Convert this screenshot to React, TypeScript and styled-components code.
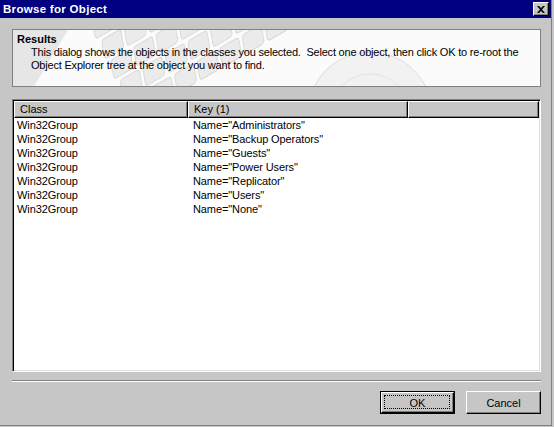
import styled, { createGlobalStyle } from "styled-components";

const GlobalStyle = createGlobalStyle`
  html, body {
    margin: 0;
    padding: 0;
    background: #c6c6c6;
  }
  body {
    font-family: "Liberation Sans", Arial, sans-serif;
    font-size: 11px;
    color: #000;
  }
`;

const Window = styled.div`
  width: 552px;
  height: 426px;
  box-sizing: border-box;
  border-right: 1px solid #808080;
  border-bottom: 1px solid #808080;
  background: #c6c6c6;
  display: flex;
  flex-direction: column;
`;

const TitleBar = styled.div`
  height: 18px;
  background: #000080;
  display: flex;
  align-items: center;
  justify-content: space-between;
  padding: 0 2px 0 3px;
`;

const TitleText = styled.span`
  color: #fff;
  font-weight: bold;
  font-size: 11.5px;
  letter-spacing: 0.3px;
`;

const CloseButton = styled.div`
  width: 16px;
  height: 14px;
  box-sizing: border-box;
  background: #c6c6c6;
  border-top: 1px solid #fff;
  border-left: 1px solid #fff;
  border-right: 1px solid #000;
  border-bottom: 1px solid #000;
  box-shadow: inset -1px -1px #808080;
  display: flex;
  align-items: center;
  justify-content: center;
`;

const Body = styled.div`
  flex: 1;
  display: flex;
  flex-direction: column;
  padding: 11px 10px 0 12px;
`;

const ResultsPanel = styled.div`
  position: relative;
  height: 58px;
  box-sizing: border-box;
  border: 1px solid #808080;
  background: #fbfbfb;
  overflow: hidden;
  padding: 3px 4px;
`;

const PanelArt = styled.svg`
  position: absolute;
  left: 0;
  top: 0;
`;

const PanelText = styled.div`
  position: relative;
  line-height: 13px;
`;

const PanelTitle = styled.div`
  font-weight: bold;
`;

const PanelDesc = styled.div`
  padding-left: 14px;
  white-space: nowrap;
  letter-spacing: -0.2px;
`;

const ListView = styled.div`
  margin-top: 12px;
  height: 273px;
  box-sizing: border-box;
  border-top: 1px solid #808080;
  border-left: 1px solid #808080;
  border-right: 1px solid #fff;
  border-bottom: 1px solid #fff;
  box-shadow: inset 1px 1px #000, inset -1px -1px #dfdfdf;
  background: #fff;
  padding: 1px;
  display: flex;
  flex-direction: column;
`;

const Columns = styled.div`
  display: grid;
  grid-template-columns: 174px 220px 1fr;
`;

const HeaderCell = styled.div`
  height: 17px;
  box-sizing: border-box;
  background: #c6c6c6;
  border-top: 1px solid #fff;
  border-left: 1px solid #fff;
  border-right: 1px solid #000;
  border-bottom: 1px solid #000;
  box-shadow: inset -1px -1px #808080;
  padding-left: 5px;
  line-height: 14px;
  white-space: nowrap;
`;

const Cell = styled.div<{ $pad: number }>`
  height: 14px;
  line-height: 14px;
  padding-left: ${({ $pad }) => $pad}px;
  white-space: nowrap;
  letter-spacing: -0.1px;
`;

const Separator = styled.div`
  margin-top: 8px;
  height: 1px;
  background: #808080;
  border-bottom: 1px solid #fff;
`;

const ButtonRow = styled.div`
  margin-top: 9px;
  display: flex;
  justify-content: flex-end;
  gap: 11px;
`;

const Button = styled.div<{ $default?: boolean }>`
  width: 75px;
  height: 23px;
  box-sizing: border-box;
  background: #c6c6c6;
  border: ${({ $default }) => ($default ? "1px solid #000" : "none")};
  display: flex;
`;

const ButtonFace = styled.div<{ $focused?: boolean }>`
  flex: 1;
  position: relative;
  border-top: 1px solid #fff;
  border-left: 1px solid #fff;
  border-right: 1px solid #000;
  border-bottom: 1px solid #000;
  box-shadow: inset -1px -1px #808080;
  display: flex;
  align-items: center;
  justify-content: center;
  font-size: 11px;

  &::after {
    content: "";
    display: ${({ $focused }) => ($focused ? "block" : "none")};
    position: absolute;
    left: 2px;
    top: 2px;
    right: 3px;
    bottom: 3px;
    border: 1px dotted #000;
  }
`;

const rows = [
  "Administrators",
  "Backup Operators",
  "Guests",
  "Power Users",
  "Replicator",
  "Users",
  "None",
];

function Artwork() {
  const keys = [];
  for (let r = 0; r < 6; r++) {
    for (let c = 0; c < 10; c++) {
      keys.push(
        <rect
          key={`${r}-${c}`}
          x={c * 26 + r * 6}
          y={r * 22}
          width={22}
          height={18}
          rx={3}
          fill="#ebebeb"
          stroke="#d9d9d9"
        />
      );
    }
  }
  return (
    <PanelArt width="530" height="58" viewBox="0 0 530 58">
      <polygon points="0,0 55,0 20,58 0,58" fill="#e6e6e6" />
      <g transform="translate(70 -30) rotate(-30 0 0) skewX(-20)">{keys}</g>
      <circle cx="357" cy="84" r="62" fill="#f2f2f2" stroke="#dcdcdc" />
      <circle cx="357" cy="84" r="40" fill="none" stroke="#e4e4e4" />
      <circle cx="357" cy="84" r="22" fill="#e6e6e6" stroke="#d2d2d2" />
      <circle cx="357" cy="84" r="10" fill="#fbfbfb" stroke="#d2d2d2" />
      <rect x="440" y="0" width="90" height="58" fill="#fbfbfb" opacity="0.75" />
    </PanelArt>
  );
}

export default function App() {
  return (
    <>
      <GlobalStyle />
      <Window>
        <TitleBar>
          <TitleText>Browse for Object</TitleText>
          <CloseButton>
            <svg width="8" height="7" viewBox="0 0 8 7">
              <path d="M0 0 L2 0 L4 2 L6 0 L8 0 L5 3.5 L8 7 L6 7 L4 5 L2 7 L0 7 L3 3.5 Z" fill="#000" />
            </svg>
          </CloseButton>
        </TitleBar>
        <Body>
          <ResultsPanel>
            <Artwork />
            <PanelText>
              <PanelTitle>Results</PanelTitle>
              <PanelDesc>
                This dialog shows the objects in the classes you selected.&nbsp; Select one object, then click OK to re-root the
                <br />
                Object Explorer tree at the object you want to find.
              </PanelDesc>
            </PanelText>
          </ResultsPanel>
          <ListView>
            <Columns>
              <HeaderCell>Class</HeaderCell>
              <HeaderCell>Key (1)</HeaderCell>
              <HeaderCell />
            </Columns>
            {rows.map((name) => (
              <Columns key={name}>
                <Cell $pad={3}>Win32Group</Cell>
                <Cell $pad={5}>Name="{name}"</Cell>
                <Cell $pad={0} />
              </Columns>
            ))}
          </ListView>
          <Separator />
          <ButtonRow>
            <Button $default>
              <ButtonFace $focused>OK</ButtonFace>
            </Button>
            <Button>
              <ButtonFace>Cancel</ButtonFace>
            </Button>
          </ButtonRow>
        </Body>
      </Window>
    </>
  );
}
